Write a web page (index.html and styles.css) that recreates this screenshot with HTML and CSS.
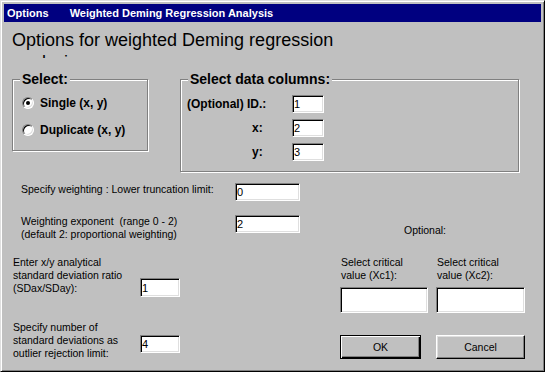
FILE: index.html
```html
<!DOCTYPE html>
<html lang="en">
<head>
    <meta charset="UTF-8">
    <title>Options</title>
    <link rel="stylesheet" href="styles.css">
</head>
<body>
    <div class="window">
        <div class="titlebar">
            <span>Options</span>
            <span class="title-name">Weighted Deming Regression Analysis</span>
        </div>

        <div class="content">
            <h1 class="heading">Options for weighted Deming regression analysis</h1>

            <div class="groups">
                <fieldset class="group group-select">
                    <legend>Select:</legend>
                    <label class="radio-row"><span class="radio checked"></span>Single (x, y)</label>
                    <label class="radio-row"><span class="radio"></span>Duplicate (x, y)</label>
                </fieldset>

                <fieldset class="group group-columns">
                    <legend>Select data columns:</legend>
                    <div class="col-row">
                        <span class="col-label">(Optional) ID.:</span>
                        <input class="field col-field" type="text" value="1">
                    </div>
                    <div class="col-row">
                        <span class="col-label col-label-short">x:</span>
                        <input class="field col-field" type="text" value="2">
                    </div>
                    <div class="col-row">
                        <span class="col-label col-label-short">y:</span>
                        <input class="field col-field" type="text" value="3">
                    </div>
                </fieldset>
            </div>

            <div class="lower">
                <div class="lower-left">
                    <div class="param param-trunc">
                        <span class="param-label">Specify weighting : Lower truncation limit:</span>
                        <input class="field param-field" type="text" value="0">
                    </div>
                    <div class="param param-exp">
                        <span class="param-label">Weighting exponent&nbsp; (range 0 - 2)<br>(default 2: proportional weighting)</span>
                        <input class="field param-field" type="text" value="2">
                    </div>
                    <div class="ratio ratio-sd">
                        <span class="ratio-label">Enter x/y analytical<br>standard deviation ratio<br>(SDax/SDay):</span>
                        <input class="field ratio-field" type="text" value="1">
                    </div>
                    <div class="ratio ratio-outlier">
                        <span class="ratio-label">Specify number of<br>standard deviations as<br>outlier rejection limit:</span>
                        <input class="field ratio-field" type="text" value="4">
                    </div>
                </div>

                <div class="lower-right">
                    <div class="optional">Optional:</div>
                    <div class="critical">
                        <div class="crit">
                            <span class="crit-label">Select critical<br>value (Xc1):</span>
                            <input class="field crit-field" type="text" value="">
                        </div>
                        <div class="crit">
                            <span class="crit-label">Select critical<br>value (Xc2):</span>
                            <input class="field crit-field" type="text" value="">
                        </div>
                    </div>
                    <div class="buttons">
                        <button class="btn btn-default" type="button">OK</button>
                        <button class="btn" type="button">Cancel</button>
                    </div>
                </div>
            </div>
        </div>
    </div>
</body>
</html>
```

FILE: styles.css
```css
/* page */
body {
    margin: 0;
    background: #c0c0c0;
    font-family: 'Liberation Sans', Arial, sans-serif;
    color: #000;
}

/* dialog window frame */
.window {
    width: 545px;
    height: 372px;
    box-sizing: border-box;
    padding: 3px;
    background: #c0c0c0;
    border: 1px solid;
    border-color: #dfdfdf #000 #000 #dfdfdf;
    box-shadow: inset 1px 1px 0 #fff, inset -1px -1px 0 #808080;
}

.titlebar {
    height: 18px;
    line-height: 18px;
    padding-left: 3px;
    background: #000080;
    color: #fff;
    font-size: 11px;
    font-weight: bold;
    white-space: nowrap;
}

.title-name {
    margin-left: 18px;
}

.content {
    padding-left: 8px;
}

/* big heading, second line is cut off */
.heading {
    width: 330px;
    height: 29px;
    margin: 7px 0 0;
    overflow: hidden;
    font-size: 18px;
    line-height: 22px;
    font-weight: normal;
}

/* group boxes */
.groups {
    display: flex;
    margin-top: 13px;
}

.group {
    box-sizing: border-box;
    margin: 0;
    border: 1px solid #808080;
    box-shadow: 1px 1px 0 #fff, inset 1px 1px 0 #fff;
}

.group legend {
    padding: 0 2px;
    background: #c0c0c0;
    font-size: 14px;
    font-weight: bold;
    line-height: 16px;
}

.group-select {
    width: 136px;
    height: 80px;
    padding: 8px 0 0 9px;
}

.group-select legend {
    margin-left: -2px;
}

.group-columns {
    width: 339px;
    height: 101px;
    margin-left: 32px;
    padding: 8px 0 0 6px;
}

.group-columns legend {
    margin-left: 1px;
}

/* radio buttons */
.radio-row {
    display: flex;
    align-items: center;
    height: 16px;
    font-size: 12px;
    font-weight: bold;
}

.radio-row + .radio-row {
    margin-top: 11px;
}

.radio {
    position: relative;
    width: 12px;
    height: 12px;
    box-sizing: border-box;
    margin-right: 6px;
    border: 1px solid;
    border-color: #808080 #fff #fff #808080;
    border-radius: 50%;
    background: #fff;
    box-shadow: inset 1px 1px 0 #000, inset -1px -1px 0 #dfdfdf;
}

.radio.checked::after {
    content: '';
    position: absolute;
    left: 3px;
    top: 3px;
    width: 4px;
    height: 4px;
    border-radius: 50%;
    background: #000;
}

/* data column rows */
.col-row {
    display: flex;
    height: 18px;
}

.col-row + .col-row {
    margin-top: 6px;
}

.col-label {
    width: 105px;
    font-size: 12px;
    font-weight: bold;
    line-height: 18px;
}

.col-label-short {
    box-sizing: border-box;
    padding-left: 65px;
}

/* sunken edit fields */
.field {
    box-sizing: border-box;
    margin: 0;
    padding: 0 1px;
    border: 1px solid;
    border-color: #808080 #fff #fff #808080;
    box-shadow: inset 1px 1px 0 #000, inset -1px -1px 0 #dfdfdf;
    background: #fff;
    font-family: 'Liberation Sans', Arial, sans-serif;
    font-size: 11px;
    color: #000;
    outline: none;
}

.col-field {
    width: 32px;
    height: 18px;
}

/* lower part */
.lower {
    display: flex;
}

.lower-left {
    width: 328px;
    font-size: 10.5px;
    line-height: 13px;
}

.param {
    display: flex;
    align-items: flex-start;
    padding-left: 9px;
}

.param-trunc {
    margin-top: 11px;
}

.param-exp {
    margin-top: 14px;
}

.param-label {
    width: 214px;
    white-space: nowrap;
}

.param-field {
    width: 65px;
    height: 18px;
}

.ratio {
    display: flex;
    align-items: flex-start;
    padding-left: 1px;
}

.ratio-sd {
    margin-top: 15px;
}

.ratio-outlier {
    margin-top: 24px;
}

.ratio-label {
    width: 127px;
    white-space: nowrap;
}

.ratio-field {
    width: 40px;
    height: 18px;
}

.ratio-sd .ratio-field {
    height: 19px;
    margin-top: 22px;
}

.ratio-outlier .ratio-field {
    margin-top: 14px;
}

.lower-right {
    padding-top: 52px;
    font-size: 10.5px;
    line-height: 13px;
}

.optional {
    padding-left: 64px;
}

.critical {
    display: grid;
    grid-template-columns: 88px 89px;
    column-gap: 8px;
    margin-top: 19px;
}

.crit {
    display: flex;
    flex-direction: column;
}

.crit-label {
    padding-left: 1px;
    white-space: nowrap;
}

.crit-field {
    height: 26px;
    margin-top: 5px;
}

/* push buttons */
.buttons {
    display: flex;
    margin-top: 22px;
}

.btn {
    width: 89px;
    height: 24px;
    padding: 0;
    border: 1px solid;
    border-color: #fff #000 #000 #fff;
    box-shadow: inset -1px -1px 0 #808080, inset 1px 1px 0 #dfdfdf;
    background: #c0c0c0;
    font-family: 'Liberation Sans', Arial, sans-serif;
    font-size: 10.5px;
    color: #000;
}

.btn-default {
    width: 81px;
    margin-right: 15px;
    border-color: #000;
    box-shadow: inset 1px 1px 0 #fff, inset -1px -1px 0 #000, inset -2px -2px 0 #808080;
}
```
